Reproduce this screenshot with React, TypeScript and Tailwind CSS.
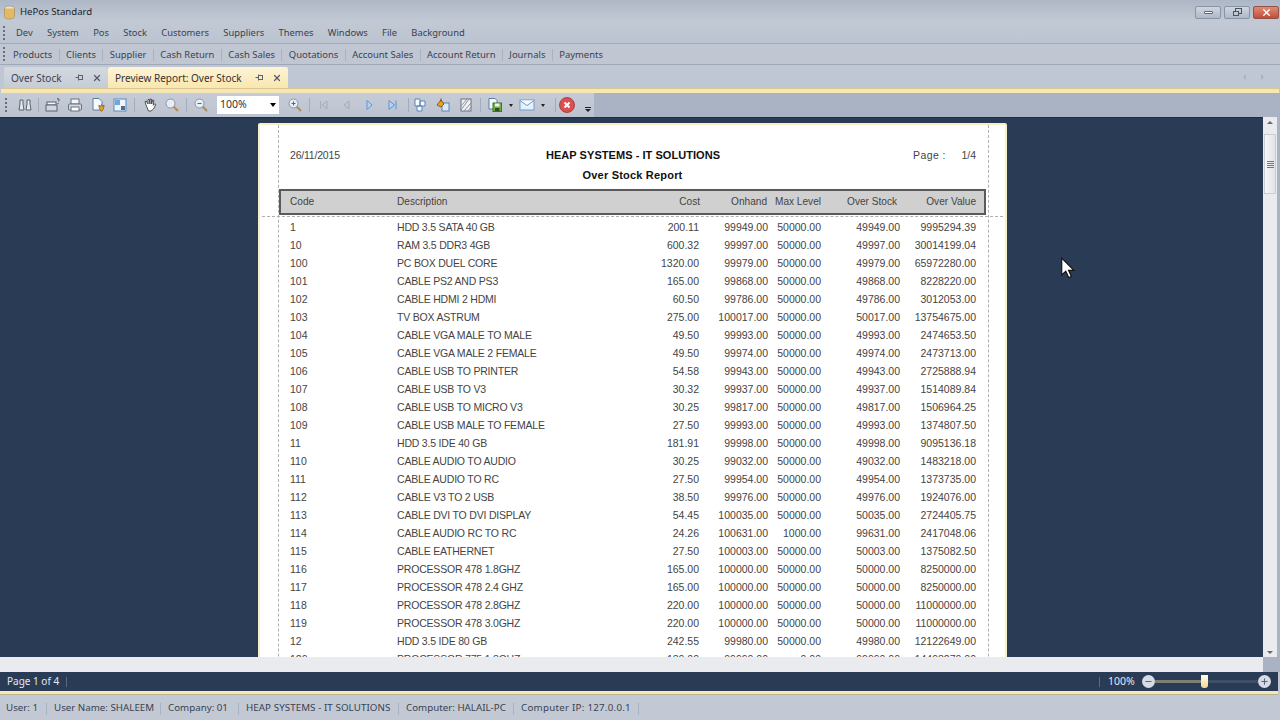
import { Minus, Plus, X } from 'lucide-react'

const font = { tahoma: 'font-["Noto_Sans",sans-serif]' }

const menuItems = ['Dev', 'System', 'Pos', 'Stock', 'Customers', 'Suppliers', 'Themes', 'Windows', 'File', 'Background']
const quickLinks = ['Products', 'Clients', 'Supplier', 'Cash Return', 'Cash Sales', 'Quotations', 'Account Sales', 'Account Return', 'Journals', 'Payments']

const rows = [
  ['1', 'HDD 3.5 SATA 40 GB', '200.11', '99949.00', '50000.00', '49949.00', '9995294.39'],
  ['10', 'RAM 3.5 DDR3 4GB', '600.32', '99997.00', '50000.00', '49997.00', '30014199.04'],
  ['100', 'PC BOX DUEL CORE', '1320.00', '99979.00', '50000.00', '49979.00', '65972280.00'],
  ['101', 'CABLE PS2 AND PS3', '165.00', '99868.00', '50000.00', '49868.00', '8228220.00'],
  ['102', 'CABLE HDMI 2 HDMI', '60.50', '99786.00', '50000.00', '49786.00', '3012053.00'],
  ['103', 'TV BOX ASTRUM', '275.00', '100017.00', '50000.00', '50017.00', '13754675.00'],
  ['104', 'CABLE VGA MALE TO MALE', '49.50', '99993.00', '50000.00', '49993.00', '2474653.50'],
  ['105', 'CABLE VGA MALE 2 FEMALE', '49.50', '99974.00', '50000.00', '49974.00', '2473713.00'],
  ['106', 'CABLE USB TO PRINTER', '54.58', '99943.00', '50000.00', '49943.00', '2725888.94'],
  ['107', 'CABLE USB TO V3', '30.32', '99937.00', '50000.00', '49937.00', '1514089.84'],
  ['108', 'CABLE USB TO MICRO V3', '30.25', '99817.00', '50000.00', '49817.00', '1506964.25'],
  ['109', 'CABLE USB MALE TO FEMALE', '27.50', '99993.00', '50000.00', '49993.00', '1374807.50'],
  ['11', 'HDD 3.5 IDE 40 GB', '181.91', '99998.00', '50000.00', '49998.00', '9095136.18'],
  ['110', 'CABLE AUDIO TO AUDIO', '30.25', '99032.00', '50000.00', '49032.00', '1483218.00'],
  ['111', 'CABLE AUDIO TO RC', '27.50', '99954.00', '50000.00', '49954.00', '1373735.00'],
  ['112', 'CABLE V3 TO 2 USB', '38.50', '99976.00', '50000.00', '49976.00', '1924076.00'],
  ['113', 'CABLE DVI TO DVI DISPLAY', '54.45', '100035.00', '50000.00', '50035.00', '2724405.75'],
  ['114', 'CABLE AUDIO RC TO RC', '24.26', '100631.00', '1000.00', '99631.00', '2417048.06'],
  ['115', 'CABLE EATHERNET', '27.50', '100003.00', '50000.00', '50003.00', '1375082.50'],
  ['116', 'PROCESSOR 478 1.8GHZ', '165.00', '100000.00', '50000.00', '50000.00', '8250000.00'],
  ['117', 'PROCESSOR 478 2.4 GHZ', '165.00', '100000.00', '50000.00', '50000.00', '8250000.00'],
  ['118', 'PROCESSOR 478 2.8GHZ', '220.00', '100000.00', '50000.00', '50000.00', '11000000.00'],
  ['119', 'PROCESSOR 478 3.0GHZ', '220.00', '100000.00', '50000.00', '50000.00', '11000000.00'],
  ['12', 'HDD 3.5 IDE 80 GB', '242.55', '99980.00', '50000.00', '49980.00', '12122649.00'],
  ['120', 'PROCESSOR 775 1.8GHZ', '180.00', '99990.00', '0.00', '99990.00', '14498270.00'],
]

const statusItems = [
  { label: 'User: 1', width: 'w-[48px]' },
  { label: 'User Name: SHALEEM', width: 'w-[114px]' },
  { label: 'Company: 01', width: 'w-[78px]' },
  { label: 'HEAP SYSTEMS - IT SOLUTIONS', width: 'w-[160px] tracking-[0.08px]' },
  { label: 'Computer: HALAIL-PC', width: 'w-[115px]' },
  { label: 'Computer IP: 127.0.0.1', width: 'w-[125px] tracking-[0.25px]' },
]

function Grip() {
  return (
    <div className="flex flex-col gap-[2px] w-[2px] shrink-0">
      <span className="block w-[2px] h-[2px] bg-[#68707e]" />
      <span className="block w-[2px] h-[2px] bg-[#68707e]" />
      <span className="block w-[2px] h-[2px] bg-[#68707e]" />
      <span className="block w-[2px] h-[2px] bg-[#68707e]" />
    </div>
  )
}

function Sep({ className = '' }: { className?: string }) {
  return <span className={`block w-px h-[14px] bg-[#a3acba] shrink-0 ${className}`} />
}

function Icon({ children, className = '' }: { children: React.ReactNode; className?: string }) {
  return (
    <span className={`flex items-center justify-center w-[22px] h-[22px] shrink-0 ${className}`}>
      <svg width="16" height="16" viewBox="0 0 16 16" fill="none">
        {children}
      </svg>
    </span>
  )
}

function PinIcon() {
  return (
    <svg width="9" height="9" viewBox="0 0 9 9" fill="none" stroke="#5a6270">
      <path d="M3.500 1.500v6M3.500 2.500h4M3.500 6.500h4M7.500 2v5M.5 4.500h3" />
    </svg>
  )
}

function PrinterShape() {
  return (
    <>
      <rect x="4" y="2" width="8" height="5" fill="#f4f6f9" stroke="#6a727f" />
      <rect x="1.500" y="7" width="13" height="6" rx="1" fill="#d3d8df" stroke="#6a727f" />
      <rect x="4" y="10" width="8" height="4" fill="#fff" stroke="#6a727f" />
    </>
  )
}

function Magnifier({ sign }: { sign?: 'plus' | 'minus' }) {
  return (
    <>
      <path d="M9.500 9.500 14 14" stroke="#b58d4e" strokeWidth="2.200" />
      <circle cx="6.500" cy="6.500" r="4.500" fill="#e6edf5" stroke="#8d95a1" />
      {sign && <path d="M4.500 6.500h4" stroke="#5c6673" />}
      {sign === 'plus' && <path d="M6.500 4.500v4" stroke="#5c6673" />}
    </>
  )
}

function Toolbar() {
  return (
    <div className="h-[24px] flex bg-[#a9b3c3]">
      <div className="w-[594px] h-full flex items-center bg-gradient-to-b from-[#c6ccd7] to-[#bcc3d0] pl-[5px]">
        <Grip />
        {/* search */}
        <Icon className="ml-[7px]">
          <path d="M3 3h3v4l1 6H2l1-6zM10 3h3v4l1 6H9l1-6z" fill="#e6e9ed" stroke="#5a626e" />
        </Icon>
        <Sep className="ml-[2px]" />
        {/* print setup */}
        <Icon className="ml-[3px]">
          <rect x="2" y="5" width="9" height="3" fill="#f4f6f9" stroke="#59616e" />
          <rect x="1" y="8" width="11" height="6" fill="#d3d8df" stroke="#59616e" />
          <path d="M12 2c2-1 3 1 1 2.500M13 6v1" stroke="#3e4652" />
        </Icon>
        <Icon>
          <PrinterShape />
        </Icon>
        <Icon className="ml-px">
          <path d="M3 1.500h6l3 3V13H3z" fill="#f7fbff" stroke="#5a7da6" />
          <path d="M9 8c0 3 1 5 2.500 6.500C13 13 14 11 14 8l-1.500 1.500L11.500 7.500 10.500 9.500z" fill="#e9a526" stroke="#9a6a12" />
        </Icon>
        <Icon>
          <rect x="2" y="2" width="12" height="12" fill="#f0f5fb" stroke="#5a87ba" />
          <rect x="3" y="3" width="5" height="5" fill="#6aa9e0" />
          <rect x="9" y="9" width="4" height="4" fill="#4f6c8d" />
        </Icon>
        <Sep className="ml-[3px]" />
        {/* hand and zoom */}
        <Icon className="ml-[4px]">
          <path d="M4 8 3 4.500l1.200-.5L6 7V2.500h1.300L8 7V2h1.300l.4 5 .9-4 1.200.3-.5 5 1.500-1.500 1 .7-2.300 4.500L9 14H6.500z" fill="#fff" stroke="#3d424b" strokeWidth=".9" />
        </Icon>
        <Icon>
          <Magnifier />
        </Icon>
        <Sep className="ml-[3px]" />
        <Icon className="ml-[3px]">
          <Magnifier sign="minus" />
        </Icon>
        <div className={`ml-[5px] w-[62px] h-[18px] bg-white flex items-center justify-between pl-[3px] pr-[3px] text-[10.5px] text-[#333] shrink-0 ${font.tahoma}`}>
          100%
          <span className="w-0 h-0 border-l-[3px] border-r-[3px] border-t-[4px] border-l-transparent border-r-transparent border-t-black" />
        </div>
        <Icon className="ml-[5px]">
          <Magnifier sign="plus" />
        </Icon>
        <Sep className="ml-[3px]" />
        {/* page nav */}
        <Icon className="ml-[3px]">
          <path d="M11 4 6 8l5 4zM4.500 4v8" stroke="#a4adbb" fill="none" />
        </Icon>
        <Icon className="ml-px">
          <path d="M10 4 5 8l5 4z" stroke="#a4adbb" fill="none" />
        </Icon>
        <Icon className="ml-px">
          <path d="M5 3.500 10 8l-5 4.500z" fill="#b7d2f0" stroke="#5b97d6" />
        </Icon>
        <Icon className="ml-px">
          <path d="M4 3.500 9.500 8 4 12.500z" fill="#b7d2f0" stroke="#5b97d6" />
          <path d="M11 3.500v9" stroke="#5b97d6" />
        </Icon>
        <Sep className="ml-[4px]" />
        {/* page layout */}
        <Icon>
          <path d="M3 2h5v7H3zM8 4h5v5H8zM5 9h5v5H5z" fill="#f5f9fe" stroke="#5b84b5" />
        </Icon>
        <Icon className="ml-px">
          <rect x="7" y="6" width="7" height="8" fill="#dbe9f6" stroke="#5b84b5" />
          <path d="M2 8 6 3l3 4-3 3z" fill="#e9a11d" stroke="#8d5e0d" />
          <path d="M6 1.500v3" stroke="#6b4a12" />
        </Icon>
        <Icon className="ml-px">
          <rect x="3" y="2" width="10" height="12" fill="#f0f1f3" stroke="#6c7480" />
          <path d="M3 9 9 2M3 13l8-11M6 14l7-8M10 14l3-4" stroke="#8a919b" />
        </Icon>
        <Sep className="ml-[3px]" />
        {/* export */}
        <Icon className="ml-[3px]">
          <path d="M2 1.500h6l2 2V12H2z" fill="#f6fafd" stroke="#5a7da6" />
          <rect x="6" y="6" width="8.500" height="8.500" fill="#6fb04a" stroke="#3d7423" />
          <rect x="8" y="6.500" width="4.500" height="3" fill="#eaf5e2" />
          <rect x="8" y="11" width="4.500" height="3" fill="#2b5517" />
        </Icon>
        <span className="ml-[3px] w-0 h-0 border-l-[2.500px] border-r-[2.500px] border-t-[3px] border-l-transparent border-r-transparent border-t-[#222] shrink-0" />
        <Icon className="ml-[3px]">
          <rect x="1" y="3" width="14" height="10" fill="#e7f0fa" stroke="#6e9bcc" />
          <path d="m1 3.500 7 5 7-5" stroke="#6e9bcc" fill="#f7fbff" />
        </Icon>
        <span className="ml-[3px] w-0 h-0 border-l-[2.500px] border-r-[2.500px] border-t-[3px] border-l-transparent border-r-transparent border-t-[#222] shrink-0" />
        <Sep className="ml-[10px]" />
        {/* close preview */}
        <Icon>
          <circle cx="8" cy="8" r="7.500" fill="#dc4f4f" stroke="#a72c2c" strokeWidth=".8" />
          <path d="m5.500 5.500 5 5m0-5-5 5" stroke="#fff" strokeWidth="2" />
        </Icon>
        <div className="ml-[7px] mt-[8px] flex flex-col items-center gap-px shrink-0">
          <span className="block w-[6px] h-px bg-[#222]" />
          <span className="w-0 h-0 border-l-[3px] border-r-[3px] border-t-[3px] border-l-transparent border-r-transparent border-t-[#222]" />
        </div>
      </div>
    </div>
  )
}

function ReportRow({ row }: { row: string[] }) {
  return (
    <div className="grid grid-cols-[107px_200px_102px_69px_53px_79px_76px] h-[18px] items-center pl-[30px] whitespace-nowrap">
      <div>{row[0]}</div>
      <div className="tracking-[-0.2px]">{row[1]}</div>
      <div className="text-right">{row[2]}</div>
      <div className="text-right">{row[3]}</div>
      <div className="text-right">{row[4]}</div>
      <div className="text-right">{row[5]}</div>
      <div className="text-right">{row[6]}</div>
    </div>
  )
}

function ReportPage() {
  return (
    <div className='relative w-[749px] h-[700px] bg-white border-2 border-[#f8efc8] rounded-[2px] text-[10.5px] text-[#444] font-["Liberation_Sans",sans-serif]'>
      {/* margin guides */}
      <div className="absolute left-[18px] top-0 bottom-0 border-l border-dashed border-[#b0b0b0]" />
      <div className="absolute left-[728px] top-0 bottom-0 border-l border-dashed border-[#b0b0b0]" />
      <div className="absolute left-[2px] right-[2px] top-[91px] border-t border-dashed border-[#b0b0b0]" />

      <div className="relative pt-[20px] h-[64px]">
        <div className="flex items-center h-[20px] pl-[30px] pr-[29px] justify-between">
          <span className="w-[120px] tracking-[-0.2px] pt-px">26/11/2015</span>
          <span className="text-[11px] font-bold text-[#111] tracking-[0.05px]">HEAP SYSTEMS - IT SOLUTIONS</span>
          <span className="w-[120px] flex justify-between pl-[57px] pt-px">
            <span className="tracking-[0.4px]">Page :</span>
            <span>1/4</span>
          </span>
        </div>
        <div className="text-center text-[11px] font-bold text-[#111] leading-[20px] tracking-[0.2px]">Over Stock Report</div>
      </div>

      <div className="relative ml-[19px] w-[707px] h-[26px] bg-[#d0d0d0] border-2 border-[#5a5a5a] flex items-center whitespace-nowrap text-[10.1px]">
        <div className="grid grid-cols-[107px_200px_103px_67px_54px_76px_79px] items-center pl-[9px]">
          <div>Code</div>
          <div>Description</div>
          <div className="text-right">Cost</div>
          <div className="text-right">Onhand</div>
          <div className="text-right">Max Level</div>
          <div className="text-right">Over Stock</div>
          <div className="text-right">Over Value</div>
        </div>
      </div>

      <div className="relative pt-[3.500px]">
        {rows.map(row => (
          <ReportRow key={row[0]} row={row} />
        ))}
      </div>
    </div>
  )
}

function VScrollbar() {
  return (
    <div className="w-[17px] shrink-0 bg-[#a9b3c4] pr-[3px]">
      <div className="h-full bg-[#e9ebef] flex flex-col items-center">
        <div className="h-[10px] flex items-center justify-center text-[#777]">
          <span className="w-0 h-0 border-l-[3px] border-r-[3px] border-b-[3px] border-l-transparent border-r-transparent border-b-[#666]" />
        </div>
        <div className="mt-[7px] w-[12px] h-[60px] bg-gradient-to-r from-[#f7f8fa] to-[#dfe2e7] border border-[#c9cdd4] flex flex-col items-center justify-center gap-px">
          <span className="block w-[7px] h-px bg-[#777]" />
          <span className="block w-[7px] h-px bg-[#777]" />
          <span className="block w-[7px] h-px bg-[#777]" />
          <span className="block w-[7px] h-px bg-[#777]" />
        </div>
        <div className="flex-1" />
        <div className="h-[10px] flex items-center justify-center">
          <span className="w-0 h-0 border-l-[3px] border-r-[3px] border-t-[3px] border-l-transparent border-r-transparent border-t-[#666]" />
        </div>
      </div>
    </div>
  )
}

export default function App() {
  return (
    <div className={`relative w-[1280px] h-[720px] overflow-hidden flex flex-col bg-[#bfc7d4] text-[#3a4250] ${font.tahoma}`}>
      {/* Title bar */}
      <div className="h-[22px] flex items-center justify-between bg-gradient-to-b from-[#aeb7c6] to-[#c3cad6] pl-[3px] pr-[1px]">
        <div className="flex items-center gap-[4px] pt-[2px]">
          <svg width="13" height="15" viewBox="0 0 13 15">
            <ellipse cx="6.500" cy="3.500" rx="5" ry="2.500" fill="#e8e3c8" stroke="#8d8a72" strokeWidth=".6" />
            <path d="M1.500 3.500v8c0 1.500 2.200 2.500 5 2.500s5-1 5-2.500v-8" fill="#e5b963" stroke="#9c8a5a" strokeWidth=".6" />
          </svg>
          <span className="text-[9.6px] text-[#20242c]">HePos Standard</span>
        </div>
        <div className="flex items-center gap-[3px] mt-[2px]">
          <div className="w-[26px] h-[13px] rounded-[2px] border border-[#8793a6] bg-gradient-to-b from-[#d0d6df] to-[#aeb8c7] flex items-center justify-center">
            <span className="block w-[9px] h-[3px] bg-white border border-[#5d6675] rounded-[1px]" />
          </div>
          <div className="w-[26px] h-[13px] rounded-[2px] border border-[#8793a6] bg-gradient-to-b from-[#d0d6df] to-[#aeb8c7] flex items-center justify-center">
            <span className="relative block w-[9px] h-[8px]">
              <span className="absolute right-0 top-0 w-[7px] h-[6px] border border-[#4a5260]" />
              <span className="absolute left-0 bottom-0 w-[6px] h-[5px] border border-[#4a5260] bg-[#c3cad6]" />
            </span>
          </div>
          <div className="w-[26px] h-[13px] rounded-[2px] border border-[#8f5148] bg-gradient-to-b from-[#e08a75] to-[#c04e36] flex items-center justify-center">
            <X size={11} strokeWidth={3} className="text-white" />
          </div>
        </div>
      </div>

      {/* Main menu */}
      <div className="h-[22px] flex items-center bg-gradient-to-b from-[#c2c9d5] to-[#bcc4d1] border-b border-[#a0a9b8] pl-[3px]">
        <Grip />
        <div className="flex items-center gap-[14.3px] ml-[11px] text-[9.4px] pt-[2px]">
          {menuItems.map(item => (
            <span key={item}>{item}</span>
          ))}
        </div>
      </div>

      {/* Quick links */}
      <div className="h-[21px] flex items-center bg-[#c0c7d3] border-b border-[#a0a9b8] pl-[3px]">
        <Grip />
        <div className="flex items-center ml-[8px] text-[9.45px] pt-[2px]">
          {quickLinks.map((item, i) => (
            <span key={item} className="flex items-center">
              {i > 0 && <span className="block w-px h-[12px] bg-[#a9b2c0] mx-[6.4px]" />}
              {item}
            </span>
          ))}
        </div>
      </div>

      {/* Tabs */}
      <div className="h-[23px] flex items-end justify-between bg-[#bfc7d4] pl-[4px] pr-[16px]">
        <div className="flex items-end text-[10px]">
          <div className="w-[104px] h-[21px] flex items-center pl-[7px] bg-gradient-to-b from-[#d3d8e0] to-[#c6ccd7] rounded-t-[2px]">
            <span className="w-[64px] pt-px">Over Stock</span>
            <span className="w-[17px] flex">
              <PinIcon />
            </span>
            <X size={10} strokeWidth={3} className="text-[#555c68]" />
          </div>
          <div className="w-[180px] h-[21px] flex items-center pl-[7px] bg-gradient-to-b from-[#fdf5d8] to-[#fae6ae] text-[#333] rounded-t-[2px]">
            <span className="w-[140px] pt-px">Preview Report: Over Stock</span>
            <span className="w-[17px] flex">
              <PinIcon />
            </span>
            <X size={10} strokeWidth={3} className="text-[#555c68]" />
          </div>
        </div>
        <div className="flex gap-[15px] pb-[8px]">
          <span className="w-0 h-0 border-t-[3px] border-b-[3px] border-r-[3px] border-t-transparent border-b-transparent border-r-[#a9b2c0]" />
          <span className="w-0 h-0 border-t-[3px] border-b-[3px] border-l-[3px] border-t-transparent border-b-transparent border-l-[#a9b2c0]" />
        </div>
      </div>
      <div className="h-[5px] bg-[#f7e7b4] border-t border-[#d8c78f] mx-[1px]" />

      <Toolbar />

      {/* Preview area */}
      <div className="flex-1 flex min-h-0 bg-[#2a3b56]">
        <div className="flex-1 overflow-hidden pl-[258px] pt-[5px] border-t border-[#1f2d44]">
          <ReportPage />
        </div>
        <VScrollbar />
      </div>

      {/* Horizontal scrollbar */}
      <div className="h-[15px] flex bg-[#a9b3c4]">
        <div className="flex-1 bg-[#e9ebee]" />
        <div className="w-[17px]" />
      </div>

      {/* Preview status */}
      <div className="h-[19px] flex items-center justify-between bg-[#2a3b56] text-[#e3e8ef] text-[10px] pl-[7px] pr-[7px] mr-[2px]">
        <div className="flex items-center gap-[7px]">
          <span>Page 1 of 4</span>
          <span className="block w-px h-[10px] bg-[#5a6a82]" />
        </div>
        <div className="flex items-center">
          <span className="block w-px h-[10px] bg-[#5a6a82] mr-[8px]" />
          <span className="w-[34px] text-[10.5px]">100%</span>
          <span className="w-[13px] h-[13px] rounded-full bg-[#d6dce6] flex items-center justify-center">
            <Minus size={9} strokeWidth={3} className="text-[#5b6678]" />
          </span>
          <div className="relative w-[103px] h-[3px] bg-[#3f4f68]">
            <div className="h-full w-[48px] bg-[#7c7f72]" />
            <span className="absolute left-[46px] top-[-5px] w-[7px] h-[13px] bg-gradient-to-b from-[#fffdf0] to-[#f3d98d] rounded-b-[3px]" />
          </div>
          <span className="w-[13px] h-[13px] rounded-full bg-[#d6dce6] flex items-center justify-center">
            <Plus size={9} strokeWidth={3} className="text-[#5b6678]" />
          </span>
        </div>
      </div>
      <div className="h-[4px] bg-[#f7e7b4] mr-[2px] border-b border-[#b9b48f]" />

      {/* App status bar */}
      <div className="h-[25px] flex items-center bg-[#c2c9d5] pl-[6px] text-[9.75px] pt-[2px]">
        {statusItems.map(item => (
          <span key={item.label} className={`flex items-center justify-between whitespace-nowrap pr-[7px] ${item.width}`}>
            {item.label}
            <span className="block w-px h-[12px] bg-[#a9b2c0]" />
          </span>
        ))}
      </div>

      {/* Mouse cursor */}
      <svg className="absolute left-[1060px] top-[257px]" width="15" height="22" viewBox="0 0 13 19">
        <path d="M1.500 1v14.500l3.500-3.200 2.500 5.500 2.400-1-2.500-5.300H12z" fill="#fff" stroke="#111" strokeWidth="1" />
      </svg>
    </div>
  )
}
